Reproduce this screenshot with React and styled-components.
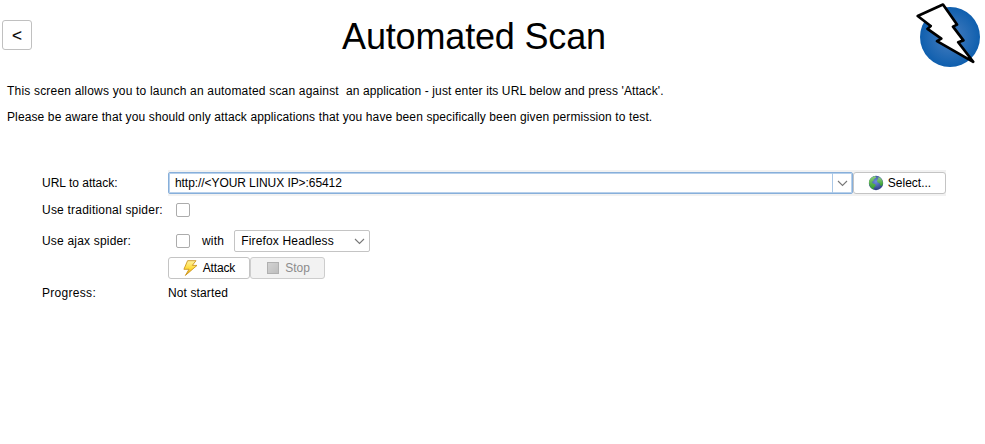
import React from 'react';
import styled, { createGlobalStyle } from 'styled-components';

const GlobalStyle = createGlobalStyle`
  * { box-sizing: border-box; }
  body {
    margin: 0;
    background: #fff;
    color: #000;
    font: 12px/16px "Liberation Sans", Arial, sans-serif;
  }
`;

const Screen = styled.main`
  width: 985px;
  height: 444px;
  overflow: hidden;
  background: #fff;
`;

const Header = styled.header`
  display: flex;
  align-items: flex-start;
  height: 83px;
`;

const BackButton = styled.button`
  width: 30px;
  height: 30px;
  margin: 20px 0 0 2px;
  padding: 1px 0 0;
  border: 1px solid #c0c0c0;
  border-radius: 3px;
  background: #fff;
  color: #000;
  font: 17px/27px "Liberation Sans", Arial, sans-serif;
  -webkit-text-stroke: 0.2px #000;
`;

const Title = styled.h1`
  width: 884px;
  margin: 16px 0 0;
  font-weight: normal;
  font-size: 36px;
  line-height: 42px;
  letter-spacing: -0.17px;
  text-align: center;
`;

const Logo = styled.svg`
  display: block;
  flex: none;
  width: 69px;
  height: 72px;
`;

const Text = styled.span`
  white-space: pre;
  letter-spacing: ${(p) => p.$track || 0}px;
`;

const Paragraph = styled.p`
  margin: 0 0 10px 7px;
  height: 16px;
`;

const Form = styled.section`
  display: grid;
  grid-template-columns: 126px 778px;
  grid-template-rows: 26px 28px 34px 20px 30px;
  align-items: center;
  margin: 45px 0 0 42px;
`;

const Field = styled.div`
  display: flex;
  align-items: center;
`;

const ButtonField = styled(Field)`
  height: 22px;
  align-self: center;
`;

const UrlField = styled(Field)`
  height: 26px;
  padding: 1px 0;
  background: #f2f2f2;
`;

const Combo = styled.div`
  display: flex;
  align-items: center;
  justify-content: space-between;
  background: #fff;
  height: 22px;
  padding-left: 6px;
  border: 1px solid #c4c4c4;
  border-radius: 2px;
`;

const UrlCombo = styled(Combo)`
  width: 685px;
  border-color: #87afda;
  box-shadow: inset 0 0 0 1px #b7d0eb;
`;

const BrowserCombo = styled(Combo)`
  width: 136px;
  margin-left: 10px;
`;

const Arrow = styled.span`
  display: flex;
  align-items: center;
  justify-content: center;
  width: 20px;
  height: 20px;
  border-left: 1px solid ${(p) => (p.$divided ? '#a9c7e6' : 'transparent')};
`;

const Button = styled.button`
  display: flex;
  align-items: center;
  justify-content: center;
  gap: 4px;
  width: ${(p) => p.$width}px;
  height: 22px;
  padding: 0;
  border: 1px solid #c4c4c4;
  border-radius: 3px;
  background: #fff;
  color: #000;
  font: inherit;
  &:disabled {
    border-color: #cdcdcd;
    background: #f2f2f2;
    color: #8c8c8c;
  }
`;

const Check = styled.span`
  width: 14px;
  height: 14px;
  margin: 0 12px 0 8px;
  border: 1px solid #acacac;
  border-radius: 2px;
  background: #fff;
`;

const StopMark = styled.span`
  width: 12px;
  height: 12px;
  margin: 0 2px;
  border: 1px solid #b0b0b0;
  background: linear-gradient(135deg, #d2d2d2, #bebebe);
`;

const Icon = styled.svg`
  display: block;
  flex: none;
`;

function Chevron() {
  return (
    <Icon width="11" height="7" viewBox="0 0 11 7">
      <path d="M1 1l4.5 4.5L10 1" fill="none" stroke="#777" strokeWidth="1.1" />
    </Icon>
  );
}

function Globe() {
  return (
    <Icon width="16" height="16" viewBox="0 0 16 16">
      <defs>
        <radialGradient id="sea" cx="50%" cy="40%" r="60%">
          <stop offset="0" stopColor="#6f8fe0" />
          <stop offset="1" stopColor="#2b3c80" />
        </radialGradient>
        <linearGradient id="land" x1="0" y1="0" x2="0" y2="1">
          <stop offset="0" stopColor="#8fd07c" />
          <stop offset="1" stopColor="#2f9a2c" />
        </linearGradient>
      </defs>
      <circle cx="8" cy="8" r="7.2" fill="url(#sea)" />
      <path d="M1 6Q2.5 2 7 1L8.3 2.4 6 4 5.4 6 3.8 7 5 8.4 7.2 9.2 7.6 11 6 12.4 5.2 14.4Q1.5 12.5 1 8Z" fill="url(#land)" />
      <path d="M9.5 2.5L12 2.4Q15 5 15.1 8L14 11 12.3 10.5 11.6 8.2 9.4 7.2 9 5 10.5 4Z" fill="url(#land)" />
    </Icon>
  );
}

function Bolt() {
  return (
    <Icon width="16" height="16" viewBox="0 0 16 16">
      <defs>
        <linearGradient id="gold" x1="0" y1="0" x2="0" y2="1">
          <stop offset="0" stopColor="#fff3a0" />
          <stop offset=".5" stopColor="#ffdc3c" />
          <stop offset="1" stopColor="#eb9d10" />
        </linearGradient>
      </defs>
      <path d="M4.6.7H13L9.3 5.4H14L2.4 15.4 6 9.3H.9Z" fill="url(#gold)" stroke="#cc961f" strokeWidth=".9" strokeLinejoin="round" />
    </Icon>
  );
}

function ZapLogo() {
  return (
    <Logo viewBox="0 0 69 72">
      <defs>
        <radialGradient id="disc">
          <stop offset="0" stopColor="#4a7fc0" />
          <stop offset="1" stopColor="#0f5fae" />
        </radialGradient>
      </defs>
      <circle cx="34" cy="37" r="30" fill="url(#disc)" />
      <path
        d="M1.7 16L27 4.6 41 24.6 37 26.6 47.4 40.4 42.2 42.2 57.2 61.8 21 41.2 25.3 38.7 11.5 28.9 14.7 26Z"
        fill="#fff"
        stroke="#000"
        strokeWidth="2.7"
        strokeLinejoin="round"
      />
    </Logo>
  );
}

export default function App() {
  return (
    <>
      <GlobalStyle />
      <Screen>
        <Header>
          <BackButton>&lt;</BackButton>
          <Title>Automated Scan</Title>
          <ZapLogo />
        </Header>
        <Paragraph>
          <Text $track={0.19}>{'This screen allows you to launch an automated scan against  '}</Text>
          <Text $track={0.1}>an application - just enter its URL below and press 'Attack'.</Text>
        </Paragraph>
        <Paragraph>
          <Text $track={0.12}>Please be aware that you should only attack applications that you have been specifically been given permission to test.</Text>
        </Paragraph>
        <Form>
          <Text>URL to attack:</Text>
          <UrlField>
            <UrlCombo>
              <Text $track={-0.07}>http://&lt;YOUR LINUX IP&gt;:65412</Text>
              <Arrow $divided><Chevron /></Arrow>
            </UrlCombo>
            <Button $width={93}><Globe /><Text>Select...</Text></Button>
          </UrlField>
          <Text $track={0.21}>Use traditional spider:</Text>
          <Field><Check /></Field>
          <Text $track={0.19}>Use ajax spider:</Text>
          <Field>
            <Check />
            <Text $track={0.2}>with</Text>
            <BrowserCombo>
              <Text $track={0.17}>Firefox Headless</Text>
              <Arrow><Chevron /></Arrow>
            </BrowserCombo>
          </Field>
          <span />
          <ButtonField>
            <Button $width={82}><Bolt /><Text $track={-0.15}>Attack</Text></Button>
            <Button $width={75} disabled><StopMark /><Text>Stop</Text></Button>
          </ButtonField>
          <Text $track={0.3}>Progress:</Text>
          <Text $track={0.12}>Not started</Text>
        </Form>
      </Screen>
    </>
  );
}
